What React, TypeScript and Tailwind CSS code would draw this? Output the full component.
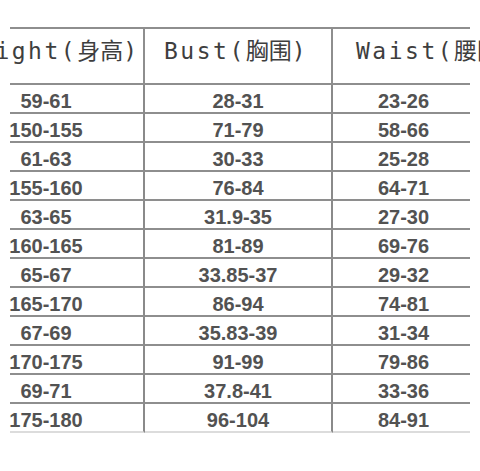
const rows: [string, string, string][] = [
  ['59-61', '28-31', '23-26'],
  ['150-155', '71-79', '58-66'],
  ['61-63', '30-33', '25-28'],
  ['155-160', '76-84', '64-71'],
  ['63-65', '31.9-35', '27-30'],
  ['160-165', '81-89', '69-76'],
  ['65-67', '33.85-37', '29-32'],
  ['165-170', '86-94', '74-81'],
  ['67-69', '35.83-39', '31-34'],
  ['170-175', '91-99', '79-86'],
  ['69-71', '37.8-41', '33-36'],
  ['175-180', '96-104', '84-91'],
];

const headFont = { fontFamily: '"DejaVu Sans Mono", "Noto Sans CJK SC", monospace' };

function Head({ en, zh }: { en: string; zh: string }) {
  return (
    <span className="shrink-0 whitespace-nowrap text-[23px]" style={headFont}>
      <span className="tracking-[2.5px]">{en}(</span>
      <span>{zh}</span>
      <span>)</span>
    </span>
  );
}

export default function App() {
  return (
    <div className="w-[480px] h-[471px] overflow-hidden bg-white pt-[27px] pl-[10px]">
      <div className="w-[460px] grid grid-cols-[135px_188px_137px] text-[#525252]">
        {/* header */}
        <div className="h-[58px] border-y-2 border-r-2 border-[#8e8e8e] flex items-center justify-end pr-[6px] pb-[9px] text-[#3e3e3e]">
          <Head en="Height" zh="身高" />
        </div>
        <div className="h-[58px] border-y-2 border-r-2 border-[#8e8e8e] flex items-center pl-[19px] pb-[9px] text-[#3e3e3e]">
          <Head en="Bust" zh="胸围" />
        </div>
        <div className="h-[58px] border-y-2 border-[#8e8e8e] flex items-center pl-[23px] pb-[9px] text-[#3e3e3e]">
          <Head en="Waist" zh="腰围" />
        </div>

        {/* body */}
        {rows.map((r, i) => {
          const line = i === rows.length - 1 ? 'border-b-[#dcdcdc]' : 'border-b-[#8e8e8e]';
          return [
            <div key={`a${i}`} className={`h-[29px] border-b-2 border-r-2 border-r-[#8a8a8a] ${line} flex items-center pt-[4px] font-['Liberation_Sans',sans-serif] font-bold text-[20px]`}>
              <div className="-ml-[63px] w-[198px] shrink-0 text-center">{r[0]}</div>
            </div>,
            <div key={`b${i}`} className={`h-[29px] border-b-2 border-r-2 border-r-[#8a8a8a] ${line} flex items-center justify-center pt-[4px] font-['Liberation_Sans',sans-serif] font-bold text-[20px]`}>
              {r[1]}
            </div>,
            <div key={`c${i}`} className={`h-[29px] border-b-2 ${line} flex items-center justify-center pl-[4px] pt-[4px] font-['Liberation_Sans',sans-serif] font-bold text-[20px]`}>
              {r[2]}
            </div>,
          ];
        })}
      </div>
    </div>
  );
}
